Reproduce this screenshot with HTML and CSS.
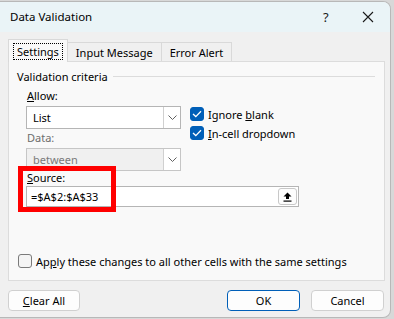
FILE: index.html
```html
<!DOCTYPE html>
<html lang="en">
<head>
    <meta charset="UTF-8">
    <title>Data Validation</title>
    <link rel="stylesheet" href="styles.css">
</head>
<body>
    <div class="window">
        <div class="titlebar">
            <span class="title">Data Validation</span>
            <span class="help">?</span>
            <svg class="close" width="12" height="12" viewBox="0 0 12 12">
                <path d="M1 1 L11 11 M11 1 L1 11" stroke="#1a1a1a" stroke-width="1.1"/>
            </svg>
        </div>

        <div class="tabs">
            <div class="tab active"><span class="focus">Settings</span></div>
            <div class="tab">Input Message</div>
            <div class="tab">Error Alert</div>
        </div>

        <div class="panel">
            <div class="group-title">
                <span>Validation criteria</span>
                <div class="rule"></div>
            </div>

            <div class="row">
                <div class="col">
                    <label class="lbl"><u>A</u>llow:</label>
                    <div class="select">
                        <span class="value">List</span>
                        <span class="arrow">
                            <svg width="9" height="5" viewBox="0 0 9 5"><path d="M0.5 0.5 L4.5 4.5 L8.5 0.5" fill="none" stroke="#606060"/></svg>
                        </span>
                    </div>
                    <label class="lbl muted">Data:</label>
                    <div class="select disabled">
                        <span class="value">between</span>
                        <span class="arrow">
                            <svg width="9" height="5" viewBox="0 0 9 5"><path d="M0.5 0.5 L4.5 4.5 L8.5 0.5" fill="none" stroke="#606060"/></svg>
                        </span>
                    </div>
                </div>
                <div class="checks">
                    <div class="check">
                        <span class="box on">
                            <svg width="10" height="8" viewBox="0 0 10 8"><path d="M1 4 L3.8 6.6 L9 1.2" fill="none" stroke="#fff" stroke-width="1.3"/></svg>
                        </span>
                        <span>Ignore <u>b</u>lank</span>
                    </div>
                    <div class="check">
                        <span class="box on">
                            <svg width="10" height="8" viewBox="0 0 10 8"><path d="M1 4 L3.8 6.6 L9 1.2" fill="none" stroke="#fff" stroke-width="1.3"/></svg>
                        </span>
                        <span><u>I</u>n-cell dropdown</span>
                    </div>
                </div>
            </div>

            <div class="source">
                <label class="lbl"><u>S</u>ource:</label>
                <div class="input">
                    <span class="value">=$A$2:$A$33</span>
                    <span class="pick">
                        <svg width="9" height="10" viewBox="0 0 9 10"><path d="M4.5 0.5 L8.5 4.5 L6 4.5 L6 7 L3 7 L3 4.5 L0.5 4.5 Z" fill="#000"/><rect x="0.5" y="8.5" width="8" height="1.2" fill="#000"/></svg>
                    </span>
                </div>
                <div class="highlight"></div>
            </div>

            <div class="check apply">
                <span class="box"></span>
                <span>Ap<u>p</u>ly these changes to all other cells with the same settings</span>
            </div>
        </div>

        <div class="footer">
            <button class="btn"><u>C</u>lear All</button>
            <div class="spacer"></div>
            <button class="btn primary">OK</button>
            <button class="btn">Cancel</button>
        </div>
    </div>
</body>
</html>
```

FILE: styles.css
```css
body {
    margin: 0;
    background: #d8d8d8;
    font-family: "Noto Sans", "Open Sans", sans-serif;
    font-size: 11px;
    color: #000;
}

.window {
    width: 391px;
    height: 317px;
    margin-top: 1px;
    background: #f0f0f0;
    border: 1px solid #b8b8b8;
    border-left: none;
    border-radius: 0 8px 8px 0;
    box-sizing: border-box;
    overflow: hidden;
}

.titlebar {
    height: 30px;
    background: #eaf4f7;
    display: flex;
    align-items: center;
    padding-left: 10px;
}

.title {
    flex: 1;
    font-size: 11.5px;
    line-height: 1;
}

.help {
    width: 10px;
    margin-right: 29px;
    font-size: 13px;
    color: #1a1a1a;
}

.close {
    margin-right: 16px;
}

.tabs {
    display: flex;
    align-items: flex-end;
    margin: 7px 0 0 8px;
    height: 22px;
    position: relative;
    z-index: 1;
}

.tab {
    height: 19px;
    padding: 0 8px;
    border: 1px solid #d9d9d9;
    border-bottom: none;
    border-left: none;
    background: #f0f0f0;
    display: flex;
    align-items: center;
    box-sizing: border-box;
}

.tab.active {
    padding: 0 4px;
    background: #f9f9f9;
    border-left: 1px solid #d9d9d9;
    margin-bottom: -1px;
    height: 23px;
}

.tab.active .focus {
    border: 1px dotted #000;
    padding: 0 3px;
    line-height: 15px;
}

.panel {
    margin-left: 8px;
    width: 377px;
    height: 220px;
    background: #f9f9f9;
    border: 1px solid #dcdcdc;
    box-sizing: border-box;
    padding: 6px 8px 0 8px;
    position: relative;
}

.group-title {
    display: flex;
    align-items: center;
    gap: 5px;
    height: 16px;
    margin-right: 1px;
}

.rule {
    flex: 1;
    border-top: 1px solid #dcdcdc;
    margin-top: 1px;
}

.row {
    display: flex;
    margin-top: 4px;
    padding-left: 9px;
}

.col {
    display: flex;
    flex-direction: column;
    width: 155px;
}

.lbl {
    display: block;
    height: 16px;
    line-height: 16px;
    padding-left: 1px;
    margin-bottom: 2px;
}

.lbl.muted {
    color: #6d6d6d;
    margin-top: 1px;
}

.select {
    height: 23px;
    display: flex;
    background: #fff;
    border: 1px solid #b5b5b5;
    box-sizing: border-box;
}

.select .value {
    flex: 1;
    padding-left: 6px;
    line-height: 21px;
}

.select .arrow {
    width: 16px;
    border-left: 1px solid #d0d0d0;
    display: flex;
    align-items: center;
    justify-content: center;
}

.select.disabled {
    background: #f0f0f0;
    border-color: #c6c6c6;
}

.select.disabled .value {
    color: #7a7a7a;
}

.select.disabled .arrow {
    background: #fff;
}

.checks {
    margin-left: 9px;
    margin-top: 19px;
    display: flex;
    flex-direction: column;
    gap: 5px;
}

.check {
    display: flex;
    align-items: center;
    gap: 4px;
    height: 14px;
}

.box {
    width: 14px;
    height: 14px;
    border-radius: 3px;
    box-sizing: border-box;
    border: 1px solid #7a7a7a;
    background: #f4f4f4;
    display: flex;
    align-items: center;
    justify-content: center;
    flex-shrink: 0;
}

.box.on {
    background: #005fb8;
    border-color: #005fb8;
}

.source {
    position: relative;
    margin-top: -1px;
    padding-left: 9px;
}

.source .lbl {
    margin-bottom: 0;
}

.input {
    width: 273px;
    height: 21px;
    display: flex;
    align-items: center;
    background: #fff;
    border: 1px solid #b5b5b5;
    box-sizing: border-box;
}

.input .value {
    flex: 1;
    padding-left: 4px;
}

.pick {
    width: 19px;
    height: 17px;
    margin-right: 1px;
    border: 1px solid #c8c8c8;
    border-radius: 3px;
    box-sizing: border-box;
    display: flex;
    align-items: center;
    justify-content: center;
    background: #fdfdfd;
}

.highlight {
    position: absolute;
    left: 1px;
    top: -4px;
    width: 98px;
    height: 46px;
    border: 5px solid #ff0000;
    box-sizing: border-box;
}

.apply {
    margin-top: 47px;
    margin-left: 1px;
}

.footer {
    display: flex;
    padding: 9px 6px 0 8px;
    gap: 11px;
}

.spacer {
    flex: 1;
}

.btn {
    width: 73px;
    height: 21px;
    font-family: inherit;
    font-size: 11px;
    background: #fdfdfd;
    border: 1px solid #d0d0d0;
    border-radius: 4px;
    padding: 0;
    color: #000;
}

.btn:first-child {
    width: 72px;
}

.btn.primary {
    border-color: #005fb8;
}

u {
    text-decoration-thickness: 1px;
    text-underline-offset: 1px;
}
```
